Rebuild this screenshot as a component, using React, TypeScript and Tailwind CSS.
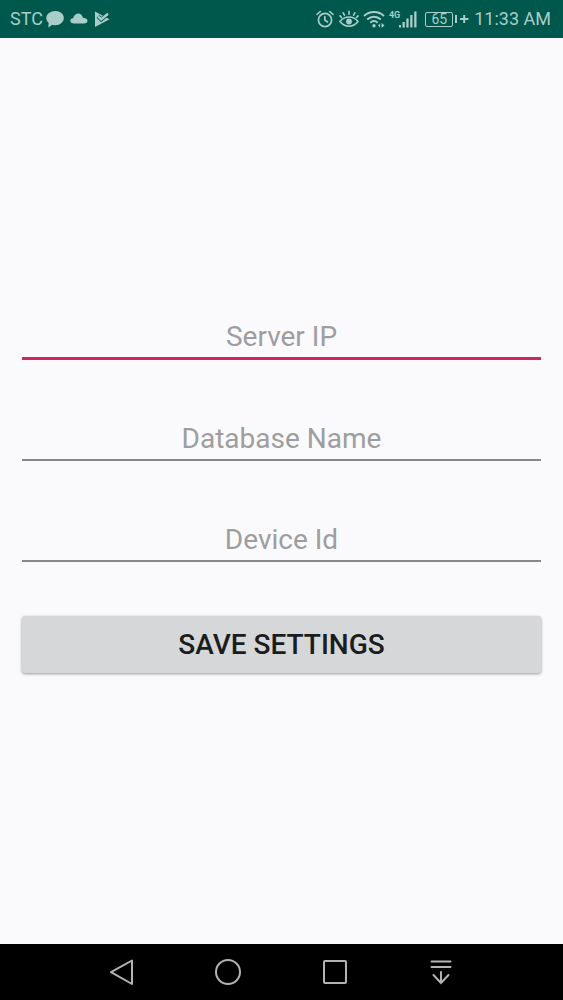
import { useState } from 'react';

const fields = [
  { id: 'server-ip', label: 'Server IP' },
  { id: 'database-name', label: 'Database Name' },
  { id: 'device-id', label: 'Device Id' },
];

function StatusBar() {
  return (
    <header className="flex h-[38px] items-center justify-between bg-[#00574b] pl-[10px] pr-3 text-[#a9cdc8]">
      <div className="flex items-center">
        <span className="text-[18px] leading-6">STC</span>
        {/* chat, cloud, play */}
        <svg className="ml-[3px] h-[18px] w-[18px]" viewBox="0 0 18 18" fill="currentColor" aria-hidden="true">
          <path d="M9.500 1C14.200 1 17.800 4 17.800 8s-3.600 7.200-8.300 7.200c-1.100 0-2.100-.1-3-.5L2.200 17.500l.5-4.600C1.200 11.600.3 9.800.3 8c0-4 4.200-7 9.200-7z" />
        </svg>
        <svg className="ml-[6px] h-[18px] w-[18px]" viewBox="0 0 18 18" fill="currentColor" aria-hidden="true">
          <path d="M4 13.500C1.600 13.500.3 12.300.3 10.800c0-1.400 1.100-2.500 2.800-2.600C3.600 5.700 5.600 3.500 8.200 3.500c2.500 0 4.200 1.700 4.700 4.200 2.600.1 4.600 1.300 4.600 3.100 0 1.600-1.300 2.700-3.500 2.700z" />
        </svg>
        <svg className="ml-[5px] h-[18px] w-[18px]" viewBox="0 0 18 18" aria-hidden="true">
          <path d="M2 1.500 16.500 9.300 2 17z" fill="currentColor" />
          <path d="M5 6.300 8.200 9.500 16 3" fill="none" stroke="#00574b" strokeWidth="4" />
          <path d="M5.200 6.500 8.200 9.300 15 3.800" fill="none" stroke="currentColor" strokeWidth="2.400" />
        </svg>
      </div>

      <div className="flex items-center">
        {/* alarm */}
        <svg className="h-[18px] w-[18px]" viewBox="0 0 18 18" fill="none" stroke="currentColor" strokeLinecap="round" aria-hidden="true">
          <circle cx="9" cy="10" r="6.600" strokeWidth="1.700" />
          <path d="M8.800 6.500V10l2.700 2M1 4.300 4.300 1.500M17 4.300l-3.300-2.800" strokeWidth="1.600" />
        </svg>
        {/* eye comfort */}
        <svg className="ml-[5px] h-[18px] w-5" viewBox="0 0 20 18" fill="none" stroke="currentColor" strokeLinecap="round" aria-hidden="true">
          <path d="M1 11.500c2.300-3 5.200-4.500 9-4.500s6.700 1.500 9 4.500c-2.300 3-5.200 4.700-9 4.700s-6.700-1.700-9-4.700z" strokeWidth="1.600" />
          <circle cx="10" cy="11.500" r="2.900" fill="currentColor" stroke="none" />
          <path d="M10 1.300v3M4.200 2.800l1.200 2.400M15.800 2.800l-1.200 2.400M1 5.900l1.500 1.600M19 5.900l-1.500 1.600" strokeWidth="1.600" />
        </svg>
        {/* wifi */}
        <svg className="ml-1 h-[18px] w-[22px]" viewBox="0 0 22 18" fill="none" stroke="currentColor" aria-hidden="true">
          <path d="M1 6C6.500.7 15.500.7 21 6M4.200 9.500c3.900-3.700 9.700-3.700 13.600 0M7.300 12.700c2.200-2 5.200-2 7.400 0" strokeWidth="1.900" />
          <circle cx="11" cy="15.700" r="1.700" fill="currentColor" stroke="none" />
          <path d="m15 15.500 2-2v4zM21.500 15.500 18.500 12.800v5.200z" fill="currentColor" stroke="none" />
        </svg>
        <span className="ml-1 self-start text-[9px] font-bold leading-4">4G</span>
        <svg className="-ml-px h-[18px] w-[18px]" viewBox="0 0 18 18" fill="currentColor" aria-hidden="true">
          <path d="M0 15h2v2.500H0zM3.500 12h2.300v5.500H3.500zM7.300 8.500h2.300v9H7.300zM11.200 5h2.300v12.500h-2.300zM15.200 1.500h2.300v16h-2.300z" />
        </svg>
        <span className="ml-2 flex h-[15px] w-7 items-center justify-center rounded-[2px] border border-current text-[14px] leading-3">65</span>
        <svg className="ml-[2px] h-[18px] w-[14px]" viewBox="0 0 14 18" fill="currentColor" aria-hidden="true">
          <path d="M0 5h2v8H0zM5 8h3.200V5h2v3h3.200v2h-3.200v3h-2v-3H5z" />
        </svg>
        <time className="ml-[5px] text-[18px] leading-6">11:33 AM</time>
      </div>
    </header>
  );
}

function NavBar() {
  const button = 'flex h-14 flex-1 items-center justify-center';
  const icon = 'h-7 w-7';

  return (
    <nav className="flex bg-black px-[68px] text-[#b3b3b3]">
      <button type="button" aria-label="Back" className={button}>
        <svg className={icon} viewBox="0 0 28 28" fill="none" stroke="currentColor" strokeWidth="2" strokeLinejoin="round">
          <path d="M25 2.500v23.500L4 14.200z" />
        </svg>
      </button>
      <button type="button" aria-label="Home" className={button}>
        <svg className={icon} viewBox="0 0 28 28" fill="none" stroke="currentColor" strokeWidth="2">
          <circle cx="14" cy="14" r="12" />
        </svg>
      </button>
      <button type="button" aria-label="Recent apps" className={button}>
        <svg className={icon} viewBox="0 0 28 28" fill="none" stroke="currentColor" strokeWidth="2">
          <rect x="3" y="3" width="22" height="22" rx="1" />
        </svg>
      </button>
      <button type="button" aria-label="Notifications" className={button}>
        <svg className={icon} viewBox="0 0 28 28" fill="none" stroke="currentColor" strokeWidth="2" strokeLinecap="round">
          <path d="M3.500 3.500h19M3.500 9h19M13 14v11M5.500 17l7.500 8 7.500-8" />
        </svg>
      </button>
    </nav>
  );
}

export default function App() {
  const [values, setValues] = useState<Record<string, string>>({});
  const [active, setActive] = useState('server-ip');

  return (
    <div className="flex min-h-screen flex-col bg-[#fafafc] font-[Roboto,sans-serif]">
      <StatusBar />
      <main className="flex flex-1 flex-col justify-center px-[22px] pb-[2px]">
        <form className="flex flex-col gap-[50px]" onSubmit={(e) => e.preventDefault()}>
          {fields.map(({ id, label }) => (
            <input
              key={id}
              id={id}
              type="text"
              aria-label={label}
              placeholder={label}
              value={values[id] ?? ''}
              onChange={(e) => setValues({ ...values, [id]: e.target.value })}
              onFocus={() => setActive(id)}
              className={`w-full pt-[13px] pb-1 text-center text-[28px] leading-8 text-[#212121] outline-none placeholder:text-[#9e9da0] ${
                active === id ? 'border-b-3 border-[#d02560]' : 'border-b-2 border-[#87868a]'
              }`}
            />
          ))}
          <button
            type="submit"
            className="mt-1 w-full rounded-[3px] bg-[#d6d7d8] pt-[13px] pb-3 text-[28px] font-medium leading-8 text-[#1b1c1e] shadow-[0_1px_3px_rgba(0,0,0,0.4)]"
          >
            SAVE SETTINGS
          </button>
        </form>
      </main>
      <NavBar />
    </div>
  );
}
